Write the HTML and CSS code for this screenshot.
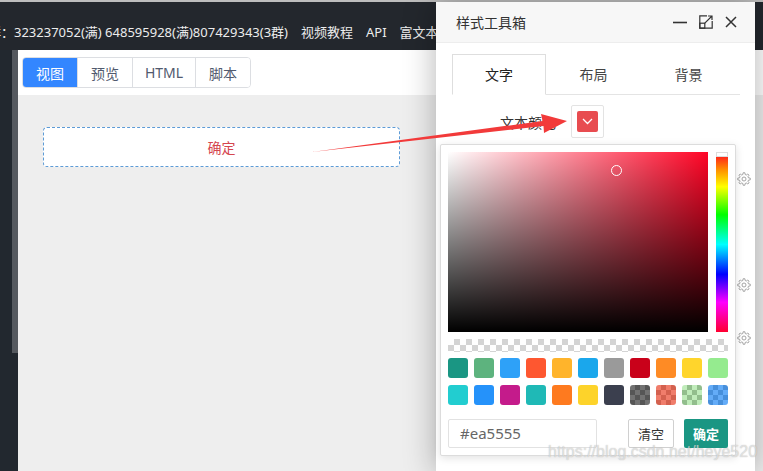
FILE: index.html
```html
<!DOCTYPE html>
<html lang="zh">
<head>
<meta charset="utf-8">
<title>样式工具箱</title>
<link rel="stylesheet" href="styles.css">
</head>
<body>
<div class="topbar">
  <nav class="nav">
    <span class="qq">群：323237052(满) 648595928(满)807429343(3群)</span>
    <span>视频教程</span>
    <span>API</span>
    <span>富文本</span>
  </nav>
</div>
<div class="below">
  <div class="side"><div class="thumb"></div></div>
  <div class="main">
    <div class="toolbar">
      <div class="btn-group">
        <button class="tb on">视图</button>
        <button class="tb">预览</button>
        <button class="tb wide">HTML</button>
        <button class="tb">脚本</button>
      </div>
    </div>
    <div class="canvas">
      <div class="drop">确定</div>
    </div>
  </div>
</div>

<div class="dialog">
  <div class="dhead">
    <span class="dtitle">样式工具箱</span>
    <div class="dicons">
      <svg width="14" height="14" viewBox="0 0 14 14"><path d="M0 7.5H14" stroke="#333" stroke-width="1.6"/></svg>
      <svg width="14" height="14" viewBox="0 0 14 14" fill="none" stroke="#333" stroke-width="1.2"><path d="M8 0.8H0.8V13.2H13.2V6"/><rect x="0.8" y="8.2" width="5" height="5"/><path d="M5.8 8.2L13 1M9 1H13V5"/></svg>
      <svg width="12" height="12" viewBox="0 0 12 12" stroke="#333" stroke-width="1.5"><path d="M1 1L11 11M11 1L1 11"/></svg>
    </div>
  </div>
  <div class="dbody">
    <div class="tabs">
      <div class="tab active">文字</div>
      <div class="tab">布局</div>
      <div class="tab">背景</div>
    </div>
    <div class="row">
      <span class="label">文本颜色</span>
      <div class="cbtn"><div class="cfill"><svg width="11" height="7" viewBox="0 0 11 7"><path d="M1 1L5.5 5.5L10 1" fill="none" stroke="#fff" stroke-width="1.3"/></svg></div></div>
    </div>
  </div>

  <svg class="gear g1" width="14" height="14" viewBox="0 0 14 14"><polygon points="5.81,2.56 6.12,0.76 7.88,0.76 8.19,2.56 9.3,3.02 10.79,1.97 12.03,3.21 10.98,4.7 11.44,5.81 13.24,6.12 13.24,7.88 11.44,8.19 10.98,9.3 12.03,10.79 10.79,12.03 9.3,10.98 8.19,11.44 7.88,13.24 6.12,13.24 5.81,11.44 4.7,10.98 3.21,12.03 1.97,10.79 3.02,9.3 2.56,8.19 0.76,7.88 0.76,6.12 2.56,5.81 3.02,4.7 1.97,3.21 3.21,1.97 4.7,3.02"/><circle cx="7" cy="7" r="2"/></svg>
  <svg class="gear g2" width="14" height="14" viewBox="0 0 14 14"><polygon points="5.81,2.56 6.12,0.76 7.88,0.76 8.19,2.56 9.3,3.02 10.79,1.97 12.03,3.21 10.98,4.7 11.44,5.81 13.24,6.12 13.24,7.88 11.44,8.19 10.98,9.3 12.03,10.79 10.79,12.03 9.3,10.98 8.19,11.44 7.88,13.24 6.12,13.24 5.81,11.44 4.7,10.98 3.21,12.03 1.97,10.79 3.02,9.3 2.56,8.19 0.76,7.88 0.76,6.12 2.56,5.81 3.02,4.7 1.97,3.21 3.21,1.97 4.7,3.02"/><circle cx="7" cy="7" r="2"/></svg>
  <svg class="gear g3" width="14" height="14" viewBox="0 0 14 14"><polygon points="5.81,2.56 6.12,0.76 7.88,0.76 8.19,2.56 9.3,3.02 10.79,1.97 12.03,3.21 10.98,4.7 11.44,5.81 13.24,6.12 13.24,7.88 11.44,8.19 10.98,9.3 12.03,10.79 10.79,12.03 9.3,10.98 8.19,11.44 7.88,13.24 6.12,13.24 5.81,11.44 4.7,10.98 3.21,12.03 1.97,10.79 3.02,9.3 2.56,8.19 0.76,7.88 0.76,6.12 2.56,5.81 3.02,4.7 1.97,3.21 3.21,1.97 4.7,3.02"/><circle cx="7" cy="7" r="2"/></svg>

  <div class="picker">
    <div class="pick">
      <div class="sv"><span class="cursor"></span></div>
      <div class="hue"><div class="hthumb"></div><div class="hbar"></div></div>
    </div>
    <div class="alpha"></div>
    <div class="swatches">
      <span class="sw c1"></span><span class="sw c2"></span><span class="sw c3"></span><span class="sw c4"></span><span class="sw c5"></span><span class="sw c6"></span><span class="sw c7"></span><span class="sw c8"></span><span class="sw c9"></span><span class="sw c10"></span><span class="sw c11"></span>
      <span class="sw c12"></span><span class="sw c13"></span><span class="sw c14"></span><span class="sw c15"></span><span class="sw c16"></span><span class="sw c17"></span><span class="sw c18"></span><span class="sw t1"></span><span class="sw t2"></span><span class="sw t3"></span><span class="sw t4"></span>
    </div>
    <div class="foot">
      <div class="hex">#ea5555</div>
      <div class="acts">
        <button class="clear">清空</button>
        <button class="ok">确定</button>
      </div>
    </div>
  </div>
</div>

<svg class="arrow" width="763" height="471" viewBox="0 0 763 471"><polygon points="312,152 542.5,121 541,114 567,121 544,133 543.5,126" fill="#f23a3a"/></svg>
<div class="watermark">https://blog.csdn.net/heye520</div>
</body>
</html>
```

FILE: styles.css
```css
* { box-sizing: border-box; }
html, body { margin: 0; padding: 0; }
body {
  width: 763px;
  height: 471px;
  overflow: hidden;
  position: relative;
  background: #eeeeee;
  font-family: "Noto Sans", "Noto Sans CJK SC", sans-serif;
  font-size: 14px;
  color: #333;
}
.topbar {
  height: 50px;
  border-top: 2px solid #bdbdbd;
  background: #23272d;
  overflow: hidden;
}
.nav {
  width: 436px;
  overflow: hidden;
  display: flex;
  gap: 13px;
  padding-top: 21px;
  line-height: 18px;
  white-space: nowrap;
  color: #ececec;
  font-size: 13px;
}
.nav span { flex: none; }
.qq { margin-left: -12px; }

.below { display: flex; height: 421px; }
.side {
  width: 18px;
  background: #22282f;
  display: flex;
  justify-content: flex-end;
}
.thumb { width: 6px; height: 303px; background: #55595f; }
.main { flex: 1; background: #eeeeee; }
.toolbar {
  height: 45px;
  background: #fff;
  padding: 7px 0 0 4px;
}
.btn-group {
  display: inline-flex;
  border: 1px solid #dcdee2;
  border-radius: 4px;
  overflow: hidden;
}
.tb {
  height: 29px;
  width: 55px;
  padding: 0;
  border: 0;
  border-left: 1px solid #dcdee2;
  background: #fff;
  color: #515a6e;
  font: 14px "Noto Sans", "Noto Sans CJK SC", sans-serif;
}
.tb:first-child { border-left: 0; width: 54px; }
.tb.wide { width: 63px; }
.tb.on { background: #3386ff; color: #fff; }
.canvas { padding: 32px 0 0 25px; }
.drop {
  width: 357px;
  height: 40px;
  border: 1px dashed #5d9bd6;
  border-radius: 4px;
  background: #fff;
  display: flex;
  align-items: center;
  justify-content: center;
  color: #d5464f;
  font-size: 14px;
  padding-bottom: 1px;
}

.dialog {
  position: absolute;
  left: 436px;
  top: 2px;
  width: 319px;
  height: 471px;
  background: #fff;
  box-shadow: 0 0 30px rgba(0, 0, 0, 0.3);
}
.dhead {
  height: 41px;
  background: #f7f7f7;
  border-bottom: 1px solid #ededed;
  display: flex;
  align-items: center;
  justify-content: space-between;
  padding: 0 18px 0 20px;
}
.dtitle { font-size: 14px; color: #333; }
.dicons { display: flex; align-items: center; gap: 12px; }
.dicons svg { display: block; }
.dbody { padding: 11px 15px 0 16px; }
.tabs {
  display: flex;
  height: 41px;
  border-bottom: 1px solid #e4e4e4;
}
.tab {
  width: 95px;
  height: 41px;
  display: flex;
  align-items: center;
  justify-content: center;
  font-size: 14px;
  color: #444;
  border: 1px solid transparent;
  padding-bottom: 2px;
}
.tab.active {
  width: 94px;
  border-color: #dedede;
  border-bottom-color: #fff;
  background: #fff;
  color: #222;
}
.row {
  display: flex;
  align-items: center;
  margin-top: 10px;
  padding-left: 48px;
}
.label { margin-right: 15px; color: #333; }
.cbtn {
  width: 33px;
  height: 33px;
  border: 1px solid #e3e3e3;
  border-radius: 2px;
  padding: 5px;
}
.cfill {
  width: 100%;
  height: 100%;
  background: #e84c50;
  border-radius: 2px;
  display: flex;
  align-items: center;
  justify-content: center;
}
.cfill svg { display: block; }

.gear {
  position: absolute;
  left: 301px;
  fill: none;
  stroke: #8f8f8f;
  stroke-width: 0.8;
}
.g1 { top: 170px; }
.g2 { top: 276px; }
.g3 { top: 329px; }

.picker {
  position: absolute;
  left: 4px;
  top: 142px;
  width: 296px;
  border: 1px solid #dcdcdc;
  border-radius: 2px;
  background: #fff;
  padding: 7px;
  box-shadow: 0 2px 8px rgba(0, 0, 0, 0.12);
}
.pick { display: flex; gap: 8px; }
.sv {
  position: relative;
  width: 260px;
  height: 180px;
  background:
    linear-gradient(to top, #000, rgba(0, 0, 0, 0)),
    linear-gradient(to right, #fff, rgba(255, 255, 255, 0)),
    #ff0526;
}
.cursor {
  position: absolute;
  left: 163px;
  top: 13px;
  width: 11px;
  height: 11px;
  border: 1px solid #fff;
  border-radius: 50%;
}
.hue { width: 12px; display: flex; flex-direction: column; }
.hthumb {
  height: 5px;
  background: #fff;
  border: 1px solid #ddd;
}
.hbar {
  height: 175px;
  background: linear-gradient(to bottom, #ff2a1a 0%, #ff8c00 7%, #ffff00 17%, #00ff00 33%, #00ffff 50%, #0000ff 67%, #ff00ff 83%, #ff0030 100%);
}
.alpha {
  margin-top: 7px;
  width: 280px;
  height: 13px;
  background: repeating-conic-gradient(#d4d4d4 0 25%, #fff 0 50%) 0 0 / 12px 12px;
}
.swatches {
  margin-top: 6px;
  display: grid;
  grid-template-columns: repeat(11, 20px);
  grid-auto-rows: 20px;
  gap: 7px 6px;
}
.sw { border-radius: 3px; display: block; }
.c1 { background: #1a9683; }
.c2 { background: #5db37e; }
.c3 { background: #2ea1f8; }
.c4 { background: #fe5730; }
.c5 { background: #ffb42b; }
.c6 { background: #1aa7ec; }
.c7 { background: #9a9a9a; }
.c8 { background: #c9011a; }
.c9 { background: #fe8b25; }
.c10 { background: #ffd52c; }
.c11 { background: #95eb8f; }
.c12 { background: #22cdd0; }
.c13 { background: #2592fa; }
.c14 { background: #c41b8b; }
.c15 { background: #1fb9b6; }
.c16 { background: #fe7a1f; }
.c17 { background: #fdd32a; }
.c18 { background: #3b3f4e; }
.t1 { background: linear-gradient(rgba(60, 60, 60, 0.72), rgba(60, 60, 60, 0.72)), repeating-conic-gradient(#999 0 25%, #fff 0 50%) 0 0 / 10px 10px; }
.t2 { background: linear-gradient(rgba(234, 75, 50, 0.72), rgba(234, 75, 50, 0.72)), repeating-conic-gradient(#999 0 25%, #fff 0 50%) 0 0 / 10px 10px; }
.t3 { background: linear-gradient(rgba(140, 220, 130, 0.55), rgba(140, 220, 130, 0.55)), repeating-conic-gradient(#999 0 25%, #fff 0 50%) 0 0 / 10px 10px; }
.t4 { background: linear-gradient(rgba(40, 140, 245, 0.72), rgba(40, 140, 245, 0.72)), repeating-conic-gradient(#999 0 25%, #fff 0 50%) 0 0 / 10px 10px; }
.foot {
  margin-top: 14px;
  display: flex;
  justify-content: space-between;
  align-items: center;
}
.hex {
  width: 149px;
  height: 29px;
  border: 1px solid #e2e2e2;
  border-radius: 2px;
  padding-left: 11px;
  line-height: 27px;
  font-size: 15px;
  color: #666;
}
.acts { display: flex; gap: 10px; }
.clear, .ok {
  height: 29px;
  padding: 0;
  border-radius: 2px;
  font: 13px "Noto Sans", "Noto Sans CJK SC", sans-serif;
}
.clear { width: 46px; border: 1px solid #d0d0d0; background: #fff; color: #333; }
.ok { width: 44px; border: 0; background: #1a9683; color: #fff; font-weight: bold; }

.arrow {
  position: absolute;
  left: 0;
  top: 0;
  pointer-events: none;
}
.watermark {
  position: absolute;
  left: 548px;
  top: 443px;
  font: 16px/18px "Liberation Sans", sans-serif;
  color: rgba(255, 255, 255, 0.55);
  text-shadow: 0 0 1px rgba(120, 120, 120, 0.6);
  white-space: nowrap;
  pointer-events: none;
}
```
